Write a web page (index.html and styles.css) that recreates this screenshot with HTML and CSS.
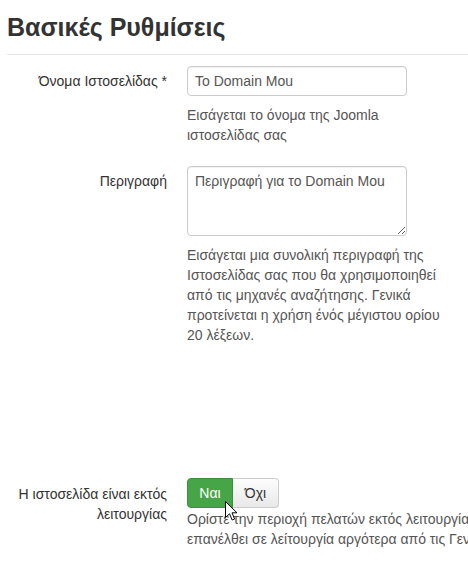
FILE: index.html
```html
<!DOCTYPE html>
<html lang="el">
<head>
<meta charset="utf-8">
<title>Βασικές Ρυθμίσεις</title>
<link rel="stylesheet" href="styles.css">
</head>
<body>
<div class="page">
  <h2 class="title">Βασικές Ρυθμίσεις</h2>
  <div class="group g1">
    <label class="label">Όνομα Ιστοσελίδας *</label>
    <div class="controls">
      <input class="input" type="text" value="To Domain Mou">
      <p class="help">Εισάγεται το όνομα της Joomla ιστοσελίδας σας</p>
    </div>
  </div>
  <div class="group g2">
    <label class="label">Περιγραφή</label>
    <div class="controls">
      <textarea class="textarea">Περιγραφή για το Domain Mou</textarea>
      <p class="help">Εισάγεται μια συνολική περιγραφή της Ιστοσελίδας σας που θα χρησιμοποιηθεί από τις μηχανές αναζήτησης. Γενικά προτείνεται η χρήση ένός μέγιστου ορίου 20 λέξεων.</p>
    </div>
  </div>
  <div class="group g3">
    <label class="label">Η ιστοσελίδα είναι εκτός λειτουργίας</label>
    <div class="controls">
      <div class="toggle">
        <span class="btn btn-yes">Ναι</span><span class="btn btn-no">Όχι</span>
        <svg class="cursor" width="13" height="20" viewBox="0 0 13 20"><path d="M0.5 0.5 L0.5 16.5 L4.5 12.8 L7.2 19 L9.6 18 L7 11.8 L12 11.8 Z" fill="#fff" stroke="#000" stroke-width="1" stroke-linejoin="miter"/></svg>
      </div>
      <p class="help nowrap">Ορίστε την περιοχή πελατών εκτός λειτουργίας για να την<br>επανέλθει σε λείτουργία αργότερα από τις Γενικές Ρυθμίσεις.</p>
    </div>
  </div>
</div>
</body>
</html>
```

FILE: styles.css
```css
html, body {
  margin: 0;
  padding: 0;
  background: #fff;
  overflow: hidden;
}
.page {
  padding-left: 7px;
  font-family: "Liberation Sans", Arial, sans-serif;
  font-size: 14px;
  line-height: 20px;
  color: #333;
}
.title {
  margin: 12px 0 0 0;
  padding-bottom: 12px;
  font-size: 25px;
  line-height: 30px;
  font-weight: bold;
  color: #333;
  border-bottom: 1px solid #e5e5e5;
}
.group {
  display: flex;
}
.g1 { margin-top: 11px; }
.g2 { margin-top: 21px; }
.g3 { margin-top: 133px; }
.label {
  width: 160px;
  flex: none;
  text-align: right;
  padding-top: 5px;
  line-height: 20px;
  color: #333;
}
.g3 .label { padding-top: 6px; }
.controls {
  margin-left: 20px;
  width: 260px;
}
.input, .textarea {
  display: block;
  box-sizing: border-box;
  width: 220px;
  margin: 0;
  padding: 4px 7px;
  font-family: "Liberation Sans", Arial, sans-serif;
  font-size: 14px;
  line-height: 20px;
  color: #555;
  border: 1px solid #ccc;
  border-radius: 4px;
  background: #fff;
  box-shadow: inset 0 1px 1px rgba(0,0,0,0.06);
}
.input { height: 30px; }
.textarea {
  height: 70px;
  resize: vertical;
  margin-bottom: 3px;
}
.help {
  margin: 9px 0 0 0;
  color: #555;
  line-height: 20px;
}
.nowrap {
  white-space: nowrap;
  margin-top: 1px;
}
.toggle {
  position: relative;
  display: flex;
  height: 30px;
}
.btn {
  box-sizing: border-box;
  width: 46px;
  height: 30px;
  display: flex;
  align-items: center;
  justify-content: center;
  font-size: 14px;
  border: 1px solid #ccc;
}
.btn-yes {
  background: #46a546;
  border-color: #3d8f3d;
  color: #fff;
  border-radius: 4px 0 0 4px;
}
.btn-no {
  background: linear-gradient(#fdfdfd, #e8e8e8);
  color: #333;
  border-left: none;
  border-radius: 0 4px 4px 0;
}
.cursor {
  position: absolute;
  left: 38px;
  top: 23px;
}
```
